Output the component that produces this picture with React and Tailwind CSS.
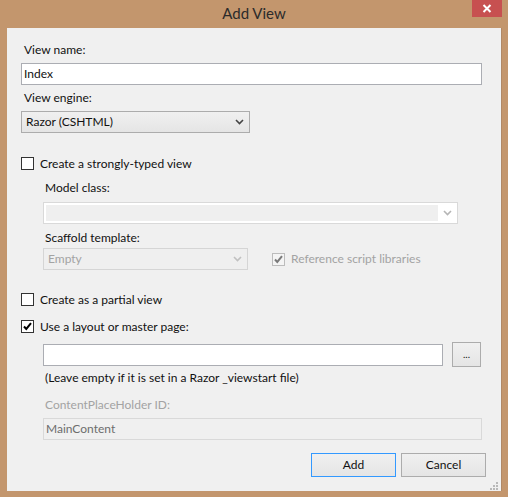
import React from "react";

const font = { fontFamily: 'Lato, "Noto Sans", sans-serif' };

function Chevron({ color = "#444" }) {
  return (
    <svg width="9" height="6" viewBox="0 0 9 6">
      <path d="M1 1 L4.5 4.5 L8 1" fill="none" stroke={color} strokeWidth="1.6" />
    </svg>
  );
}

function Check({ color = "#000" }) {
  return (
    <svg width="11" height="11" viewBox="0 0 11 11">
      <path d="M2 5.5 L4.3 8 L9 2.2" fill="none" stroke={color} strokeWidth="2" />
    </svg>
  );
}

function CheckBox({ checked, disabled }) {
  return (
    <div
      className={
        "w-[13px] h-[13px] flex items-center justify-center border " +
        (disabled ? "border-[#bcbcbc] bg-[#f4f4f4]" : "border-[#333333] bg-white")
      }
    >
      {checked ? <Check color={disabled ? "#7a7a7a" : "#000"} /> : null}
    </div>
  );
}

export default function App() {
  return (
    <div
      className="w-[508px] h-[497px] bg-[#c3966d] flex flex-col text-[12px] leading-[16px] text-[#111]"
      style={font}
    >
      {/* title bar */}
      <div className="h-[28px] flex items-start">
        <div className="flex-1 flex justify-center pt-[3px] pl-[36px]">
          <span className="text-[15px] leading-[20px] text-[#2b2b2b]">Add View</span>
        </div>
        <div className="w-[30px] h-[17px] bg-[#c75050] flex items-center justify-center mr-[6px]">
          <svg width="10" height="9" viewBox="0 0 10 9">
            <path d="M1.5 1 L8.5 8 M8.5 1 L1.5 8" stroke="#fff" strokeWidth="2" />
          </svg>
        </div>
      </div>

      {/* client area */}
      <div className="ml-[7px] w-[495px] h-[463px] bg-[#f0f0f0] border-r border-[#b08866] pl-[14px] flex flex-col">
        <div className="mt-[14px] pl-[3px] h-[16px]">View name:</div>
        <div className="mt-[5px] w-[461px] h-[22px] border border-[#abadb3] bg-white flex items-center pl-[2px]">
          Index
        </div>
        <div className="mt-[5px] pl-[3px] h-[16px]">View engine:</div>
        <div className="mt-[5px] w-[229px] h-[22px] border border-[#acacac] bg-gradient-to-b from-[#f0f0f0] to-[#e5e5e5] flex items-center pl-[4px] pr-[5px] justify-between">
          <span>Razor (CSHTML)</span>
          <Chevron />
        </div>

        {/* strongly typed */}
        <div className="mt-[22px] h-[17px] flex items-center gap-[6px]">
          <CheckBox />
          <span>Create a strongly-typed view</span>
        </div>
        <div className="pl-[22px] flex flex-col">
          <div className="mt-[8px] pl-[2px] h-[16px]">Model class:</div>
          <div className="mt-[6px] w-[415px] h-[22px] border border-[#d9d9d9] bg-white flex">
            <div className="flex-1 my-[2px] ml-[2px] bg-[#efefef]" />
            <div className="w-[19px] flex items-center justify-center">
              <Chevron color="#b5b5b5" />
            </div>
          </div>
          <div className="mt-[6px] pl-[2px] h-[16px]">Scaffold template:</div>
          <div className="mt-[2px] flex items-center">
            <div className="w-[205px] h-[22px] border border-[#d5d5d5] bg-[#efefef] flex items-center justify-between pl-[4px] pr-[5px] text-[#a3a3a3]">
              <span>Empty</span>
              <Chevron color="#c0c0c0" />
            </div>
            <div className="ml-[24px] flex items-center gap-[6px] text-[#a3a3a3]">
              <CheckBox checked disabled />
              <span>Reference script libraries</span>
            </div>
          </div>
        </div>

        <div className="mt-[21px] h-[17px] flex items-center gap-[6px]">
          <CheckBox />
          <span>Create as a partial view</span>
        </div>
        <div className="mt-[10px] h-[17px] flex items-center gap-[6px]">
          <CheckBox checked />
          <span>Use a layout or master page:</span>
        </div>

        <div className="pl-[22px] flex flex-col">
          <div className="mt-[7px] flex items-center">
            <div className="w-[400px] h-[22px] border border-[#abadb3] bg-white" />
            <div className="ml-[9px] w-[29px] h-[25px] border border-[#acacac] bg-gradient-to-b from-[#f0f0f0] to-[#e5e5e5] flex items-center justify-center text-[10px] leading-[10px] pb-[2px]">
              ...
            </div>
          </div>
          <div className="mt-[3px] pl-[2px] h-[16px]">(Leave empty if it is set in a Razor _viewstart file)</div>
          <div className="mt-[11px] pl-[2px] h-[16px] text-[#a3a3a3]">ContentPlaceHolder ID:</div>
          <div className="mt-[5px] w-[439px] h-[22px] border border-[#d9d9d9] bg-[#f0f0f0] flex items-center pl-[2px] text-[#6d6d6d]">
            MainContent
          </div>
        </div>

        <div className="mt-[13px] flex pl-[290px] gap-[5px]">
          <div className="w-[85px] h-[24px] border border-[#3399ff] bg-gradient-to-b from-[#f0f0f0] to-[#e5e5e5] flex items-center justify-center">
            Add
          </div>
          <div className="w-[85px] h-[24px] border border-[#acacac] bg-gradient-to-b from-[#f0f0f0] to-[#e5e5e5] flex items-center justify-center">
            Cancel
          </div>
        </div>
        <div className="flex justify-end mt-[5px] pr-[2px]">
          <svg width="9" height="9" viewBox="0 0 9 9">
            <g fill="#b8b8b8">
              <rect x="6" y="0" width="2" height="2" />
              <rect x="3" y="3" width="2" height="2" />
              <rect x="6" y="3" width="2" height="2" />
              <rect x="0" y="6" width="2" height="2" />
              <rect x="3" y="6" width="2" height="2" />
              <rect x="6" y="6" width="2" height="2" />
            </g>
          </svg>
        </div>
      </div>
    </div>
  );
}
